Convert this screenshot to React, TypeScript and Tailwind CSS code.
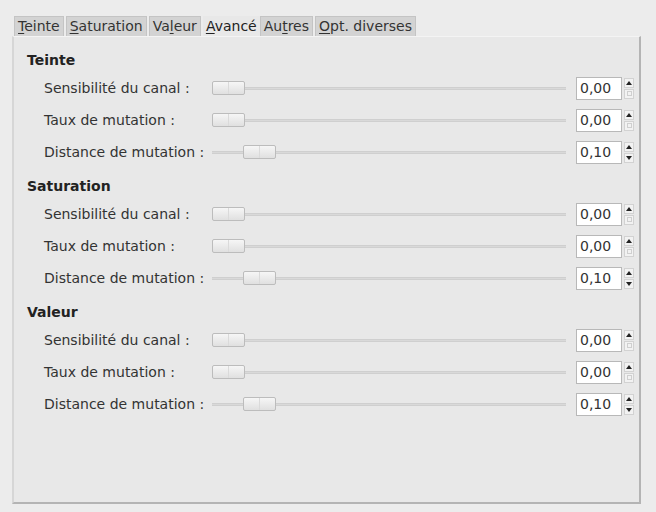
import React from "react";

type Row = { label: string; value: string; pos: number };

const rows: Row[] = [
  { label: "Sensibilité du canal :", value: "0,00", pos: 0 },
  { label: "Taux de mutation :", value: "0,00", pos: 0 },
  { label: "Distance de mutation :", value: "0,10", pos: 31 },
];

const sections = ["Teinte", "Saturation", "Valeur"];

function Tab({ pre, u, post, active }: { pre: string; u: string; post: string; active?: boolean }) {
  return (
    <div
      className={
        active
          ? "h-[20px] px-[3px] flex items-center text-[#222] bg-[#e8e8e8]"
          : "h-[20px] px-[3px] flex items-center text-[#333] bg-[#d3d3d3] border border-[#c4c4c4] border-b-0 mr-[2px]"
      }
    >
      <span>
        {pre}
        <span className="underline underline-offset-2">{u}</span>
        {post}
      </span>
    </div>
  );
}

function Slider({ pos }: { pos: number }) {
  return (
    <div className="relative w-[354px] h-[16px] flex items-center">
      <div className="w-full h-[3px] bg-[#d9d9d9] border-y border-[#cfcfcf]" />
      <div
        className="absolute top-[1px] h-[14px] w-[33px] rounded-[2px] border border-[#bcbcbc] bg-gradient-to-b from-[#f6f6f6] to-[#e0e0e0] flex"
        style={{ left: pos }}
      >
        <div className="w-1/2 border-r border-[#dadada]" />
      </div>
    </div>
  );
}

function Spin({ value, disabledDown }: { value: string; disabledDown: boolean }) {
  return (
    <div className="flex items-center">
      <div className="w-[46px] h-[23px] bg-white border border-[#b8b8b8] flex items-center pl-[3px] text-[#333]">
        {value}
      </div>
      <div className="w-[12px] h-[22px] flex flex-col items-center justify-center gap-[1px] ml-[1px]">
        <div className="w-[10px] h-[10px] bg-[#f2f2f2] border border-[#d2d2d2] flex items-center justify-center">
          <div className="w-0 h-0 border-l-[3px] border-r-[3px] border-b-[4px] border-l-transparent border-r-transparent border-b-[#222]" />
        </div>
        <div className="w-[10px] h-[10px] bg-[#f2f2f2] border border-[#d2d2d2] flex items-center justify-center">
          {disabledDown ? (
            <div className="w-[5px] h-[5px] border border-[#cfcfcf]" />
          ) : (
            <div className="w-0 h-0 border-l-[3px] border-r-[3px] border-t-[4px] border-l-transparent border-r-transparent border-t-[#222]" />
          )}
        </div>
      </div>
    </div>
  );
}

export default function App() {
  return (
    <div
      className="w-[656px] h-[512px] bg-[#ececec] pt-[16px] pl-[12px] pr-[15px] pb-[8px] flex flex-col text-[14px] text-[#333]"
      style={{ fontFamily: '"DejaVu Sans", sans-serif' }}
    >
      <div className="flex pl-[2px] h-[20px] items-end">
        <Tab pre="" u="T" post="einte" />
        <Tab pre="" u="S" post="aturation" />
        <Tab pre="Va" u="l" post="eur" />
        <Tab pre="" u="A" post="vancé" active />
        <Tab pre="Au" u="t" post="res" />
        <Tab pre="" u="O" post="pt. diverses" />
      </div>
      <div className="flex-1 bg-[#e8e8e8] border-l-2 border-l-[#d6d6d6] border-t border-t-[#f4f4f4] border-r-2 border-r-[#b4b4b4] border-b-2 border-b-[#b4b4b4] pt-[13px] pl-[13px] flex flex-col gap-[8px]">
        {sections.map((s) => (
          <div key={s} className="flex flex-col">
            <div className="h-[20px] flex items-center font-bold text-[#222] mb-[2px]">{s}</div>
            {rows.map((r) => (
              <div key={r.label} className="h-[32px] flex items-center">
                <div className="w-[185px] pl-[17px] whitespace-nowrap">{r.label}</div>
                <Slider pos={r.pos} />
                <div className="w-[10px]" />
                <Spin value={r.value} disabledDown={r.value === "0,00"} />
              </div>
            ))}
          </div>
        ))}
      </div>
    </div>
  );
}
